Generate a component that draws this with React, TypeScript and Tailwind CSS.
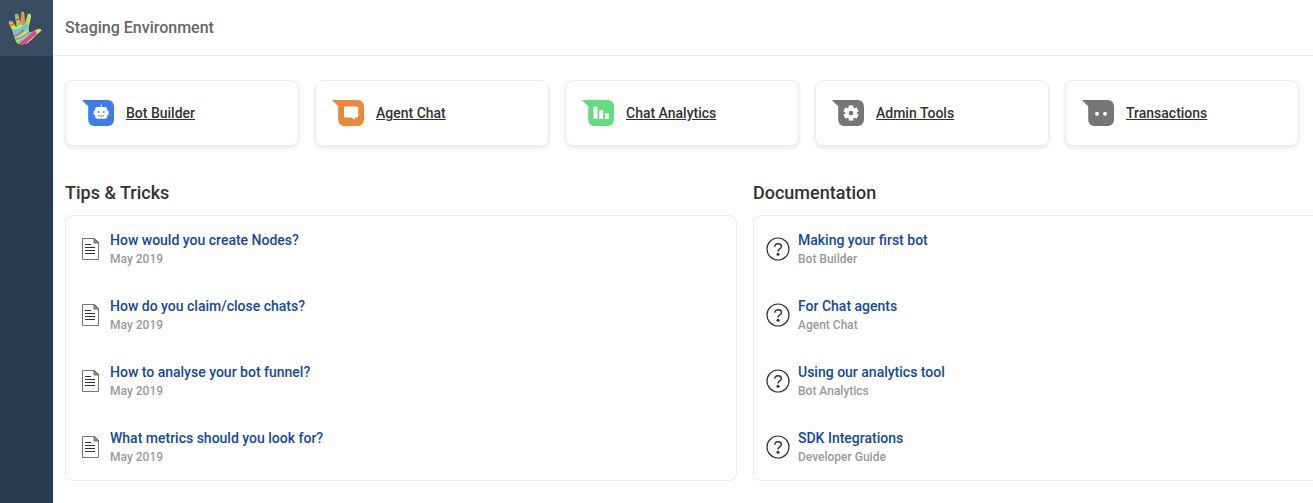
import React from "react";

const HAND =
  "M18.500 43.800 C15.500 42.500 14.500 38 13.400 33.500 C12.800 29.500 9 25.500 8.800 22.600 C8.700 20.500 11.400 20.200 12.600 21.800 L15.800 26.800 C16.300 27.400 16.900 27 16.800 26.300 L14.900 16 C14.700 13.400 17.700 13 18.400 15.200 L20.600 24 L21 13.500 C21.100 11.300 24.100 11.300 24.300 13.500 L24.800 24.600 L27.400 15.200 C28.100 13 31.200 13.500 31.100 15.800 C30.700 20.500 28.900 25 28.600 29 C28.500 31.700 30 32.900 32.200 31.900 C34.200 31 36.600 29 39 28.700 C41.300 28.500 42 30.400 40.400 31.500 C36.200 34.600 32 40 28 42.700 C25 44.600 21 44.700 18.500 43.800 Z";

function HandLogo() {
  return (
    <svg viewBox="0 0 53 56" className="h-14 w-[53px]">
      <defs>
        <clipPath id="hand">
          <path d={HAND} />
        </clipPath>
      </defs>
      <g clipPath="url(#hand)">
        <rect width="53" height="56" fill="#dde23f" />
        <g fill="none">
          <path d="M8 22.500 L14 20.500" stroke="#50bdd8" strokeWidth="2.400" />
          <path d="M9 26 L17 22.500" stroke="#f06a2a" strokeWidth="2" />
          <path d="M14 16.500 L20 14" stroke="#50bdd8" strokeWidth="3" />
          <path d="M14 20.500 L21 18.500" stroke="#ef5b35" strokeWidth="2.600" />
          <path d="M16 25 L22 22" stroke="#62c4c8" strokeWidth="2.600" />
          <path d="M22.200 11 L22.800 25" stroke="#f28a2c" strokeWidth="2.800" />
          <path d="M28.600 13 L25.800 28" stroke="#8ed8b0" strokeWidth="2" />
          <path d="M12 31.500 C17 33.500 23 30 28 25" stroke="#69c8e0" strokeWidth="5.500" />
          <path d="M14 36 C18 35.800 21 33 23.500 30" stroke="#e64b93" strokeWidth="1.600" />
          <path d="M14 39.500 C20 38.500 26 36 30 31.500" stroke="#55b8dc" strokeWidth="2.600" />
          <path d="M16 42.500 C20 41 22 40.500 26 38" stroke="#6bc96b" strokeWidth="1.200" />
          <path d="M20 44.500 C26 42.500 29 36 36 32.500" stroke="#e0439b" strokeWidth="4.200" />
        </g>
      </g>
    </svg>
  );
}

function Bubble({ color, children }: { color: string; children: React.ReactNode }) {
  return (
    <svg viewBox="0 0 32 26" className="h-[26px] w-8 shrink-0">
      <path
        d="M0 0 H25 C29.5 0 32 2.5 32 7 V19 C32 23.500 29.500 26 25 26 H13 C8.500 26 6.200 23.500 6.200 19 V6 C4 4.500 2 2.300 0 0 Z"
        fill={color}
      />
      {children}
    </svg>
  );
}

const apps = [
  {
    name: "Bot Builder",
    color: "#3b7de9",
    glyph: (
      <>
        <path
          d="M18.700 4.500 h.9 V7 H23 a2.200 2.200 0 0 1 2.200 2.200 V10.500 h.6 a.9 .9 0 0 1 .9 .9 v2.800 a.9 .9 0 0 1 -.9 .9 h-.6 V16.500 A2.300 2.300 0 0 1 23 18.800 H15.400 A2.300 2.300 0 0 1 13.100 16.500 V15.100 h-.6 a.9 .9 0 0 1 -.9 -.9 v-2.800 a.9 .9 0 0 1 .9 -.9 h.6 V9.200 A2.200 2.200 0 0 1 15.300 7 h3.400 Z"
          fill="#fff"
        />
        <circle cx="16.500" cy="12" r=".9" fill="#3b7de9" />
        <circle cx="21.800" cy="12" r=".9" fill="#3b7de9" />
        <path d="M16.200 15.600 Q19.200 16.900 22.200 15.600" stroke="#3b7de9" strokeWidth=".9" fill="none" />
      </>
    ),
  },
  {
    name: "Agent Chat",
    color: "#ec883a",
    glyph: (
      <path
        d="M13.500 6.500 H24.700 a1.500 1.500 0 0 1 1.500 1.500 V16 a1.500 1.500 0 0 1 -1.500 1.500 H22.700 V19.800 L19.300 17.500 H13.500 A1.500 1.500 0 0 1 12 16 V8 A1.500 1.500 0 0 1 13.500 6.500 Z"
        fill="#fff"
      />
    ),
  },
  {
    name: "Chat Analytics",
    color: "#62dc7e",
    glyph: (
      <path d="M11.500 6.800 h4 V19 h-4 Z M17.200 10 h4 V19 h-4 Z M22.900 13.300 h4 V19 h-4 Z" fill="#fff" />
    ),
  },
  {
    name: "Admin Tools",
    color: "#767676",
    glyph: (
      <>
        <g stroke="#fff" strokeWidth="4.600">
          <path d="M19 5.400 V20.600" />
          <path d="M12.420 9.200 L25.580 16.800" />
          <path d="M12.420 16.800 L25.580 9.200" />
        </g>
        <circle cx="19" cy="13" r="5.900" fill="#fff" />
        <circle cx="19" cy="13" r="2.300" fill="#767676" />
      </>
    ),
  },
  {
    name: "Transactions",
    color: "#767676",
    glyph: (
      <g fill="#fff">
        <circle cx="15" cy="13.700" r="2" />
        <circle cx="23" cy="13.700" r="2" />
      </g>
    ),
  },
];

function DocIcon() {
  return (
    <svg viewBox="0 0 18 22" className="ml-4 h-[22px] w-[18px] shrink-0" fill="none" stroke="#333">
      <path d="M.500 .500 H12.500 L16.500 4.500 V21.500 H.500 Z" stroke="#777" />
      <path d="M12 .500 L16.500 5 H12 Z" stroke="#555" fill="#999" strokeWidth=".8" />
      <path d="M3 6.500 H9 M3 9.500 H13 M3 12.500 H13 M3 15.500 H13" />
    </svg>
  );
}

function HelpIcon() {
  return (
    <svg viewBox="0 0 24 24" className="ml-3 h-6 w-6 shrink-0" fill="none" stroke="#333">
      <circle cx="12" cy="12" r="11" strokeWidth="1.200" />
      <path
        d="M8.800 9.800 C8.800 7.800 10.100 6.700 12.100 6.700 C14.100 6.700 15.400 7.700 15.400 9.400 C15.400 12 12 11.700 12 14.600"
        strokeWidth="1.400"
      />
      <circle cx="12" cy="17.200" r="1.500" fill="#333" stroke="none" />
    </svg>
  );
}

const tips = [
  ["How would you create Nodes?", "May 2019"],
  ["How do you claim/close chats?", "May 2019"],
  ["How to analyse your bot funnel?", "May 2019"],
  ["What metrics should you look for?", "May 2019"],
];

const docs = [
  ["Making your first bot", "Bot Builder"],
  ["For Chat agents", "Agent Chat"],
  ["Using our analytics tool", "Bot Analytics"],
  ["SDK Integrations", "Developer Guide"],
];

function Panel({ title, items, icon }: { title: string; items: string[][]; icon: React.ReactNode }) {
  return (
    <section className="w-[672px] shrink-0">
      <h2 className="text-lg leading-6 font-medium text-[#333]">{title}</h2>
      <ul className="mt-[10px] h-[266px] rounded-lg border border-[#ebebeb]">
        {items.map(([name, note]) => (
          <li key={name} className="flex h-[66px] items-center">
            <div className="flex w-11 shrink-0">{icon}</div>
            <div>
              <a className="block text-sm leading-5 font-medium text-[#1149a6]">{name}</a>
              <p className="text-xs leading-[18px] font-medium text-[#999]">{note}</p>
            </div>
          </li>
        ))}
      </ul>
    </section>
  );
}

export default function App() {
  return (
    <div className="flex h-[503px] w-[1313px] overflow-hidden bg-white font-['Roboto',sans-serif]">
      <aside className="w-[53px] shrink-0 bg-[#283a50]">
        <div className="h-14 bg-[#394b60]">
          <HandLogo />
        </div>
      </aside>
      <main className="min-w-0 flex-1">
        <header className="flex h-14 items-center border-b border-[#e9e9e9] pl-3">
          <h1 className="text-base font-medium text-[#666]">Staging Environment</h1>
        </header>
        <nav className="flex gap-4 pt-6 pl-3">
          {apps.map((app) => (
            <a
              key={app.name}
              className="flex h-[66px] w-[234px] shrink-0 items-center gap-3 rounded-lg border border-[#ebebeb] pl-4 shadow-[0_2px_4px_rgba(0,0,0,0.1)]"
            >
              <Bubble color={app.color}>{app.glyph}</Bubble>
              <span className="text-sm font-medium text-[#333] underline">{app.name}</span>
            </a>
          ))}
        </nav>
        <div className="flex gap-4 pt-[35px] pl-3">
          <Panel title="Tips & Tricks" items={tips} icon={<DocIcon />} />
          <Panel title="Documentation" items={docs} icon={<HelpIcon />} />
        </div>
      </main>
    </div>
  );
}
